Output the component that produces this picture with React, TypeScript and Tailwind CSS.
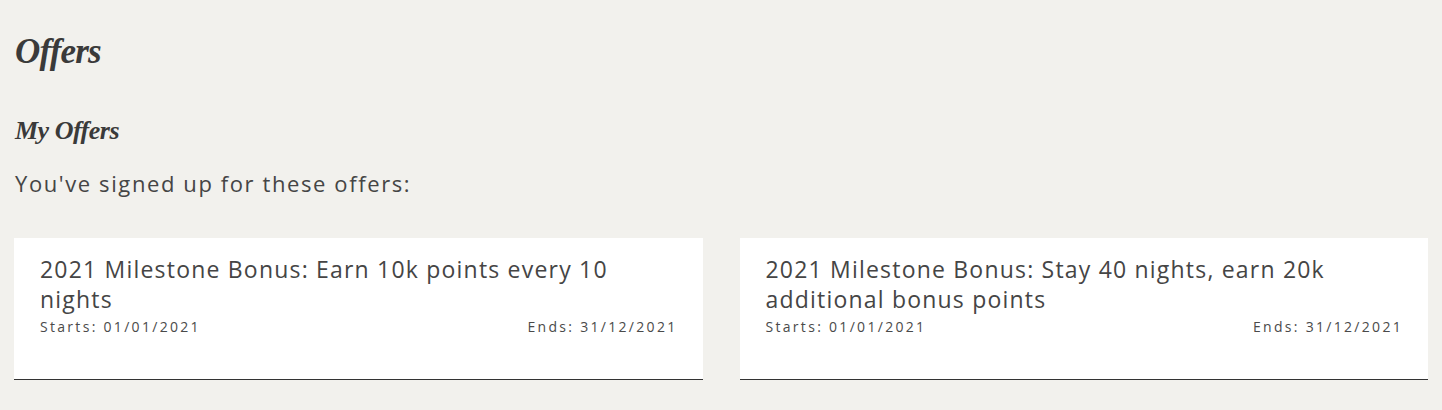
import React from "react";

const offers = [
  {
    title: "2021 Milestone Bonus: Earn 10k points every 10 nights",
    starts: "01/01/2021",
    ends: "31/12/2021",
  },
  {
    title: "2021 Milestone Bonus: Stay 40 nights, earn 20k additional bonus points",
    starts: "01/01/2021",
    ends: "31/12/2021",
  },
];

export default function App() {
  return (
    <div className="min-h-[410px] w-full bg-[#f2f1ed] px-[14px] pt-[30px] pb-[30px] text-[#3d3d3d] font-['Open_Sans','Noto_Sans',sans-serif]">
      <h1 className="pl-[1px] font-['Liberation_Serif',serif] text-[35px] font-bold italic leading-[44px] tracking-[-0.8px] text-[#3a3a3a]">
        Offers
      </h1>
      <h2 className="mt-[42px] pl-[1px] font-['Liberation_Serif',serif] text-[26px] font-bold italic leading-[30px] tracking-[-0.5px] text-[#3a3a3a]">
        My Offers
      </h2>
      <p className="mt-[22px] pl-[1px] text-[22px] font-normal leading-[30px] tracking-[1.6px] text-[#454545]">
        You've signed up for these offers:
      </p>
      <div className="mt-[40px] grid grid-cols-2 gap-[37px]">
        {offers.map((o) => (
          <div
            key={o.title}
            className="h-[142px] border-b border-[#333] bg-white pl-[26px] pr-[25px] pt-[16px]"
          >
            <div className="pr-[20px] text-[23px] font-normal leading-[30px] tracking-[1.2px] text-[#454545]">
              {o.title}
            </div>
            <div className="mt-[3px] flex justify-between text-[14px] font-normal leading-[20px] tracking-[2.3px] text-[#4a4a4a]">
              <span>Starts: {o.starts}</span>
              <span>Ends: {o.ends}</span>
            </div>
          </div>
        ))}
      </div>
    </div>
  );
}
